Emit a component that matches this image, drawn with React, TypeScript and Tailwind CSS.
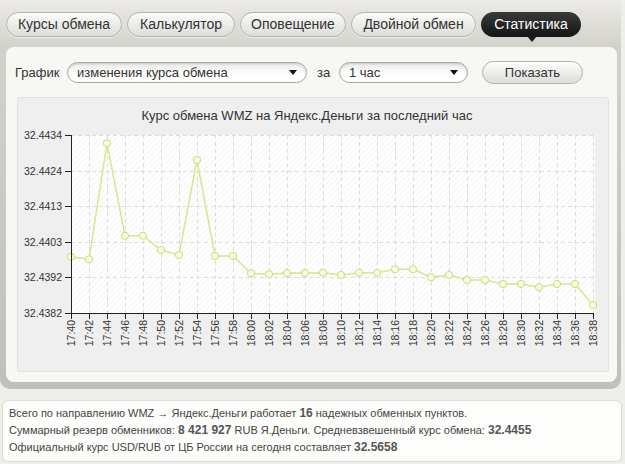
import React from "react";

const TABS = [
  { label: "Курсы обмена", w: "w-[116px]" },
  { label: "Калькулятор", w: "w-[108px]" },
  { label: "Оповещение", w: "w-[106px]" },
  { label: "Двойной обмен", w: "w-[125px]" },
];

const TIMES = Array.from({ length: 30 }, (_, i) => {
  const m = 40 + i * 2;
  const h = 17 + Math.floor(m / 60);
  return `${h}:${String(m % 60).padStart(2, "0")}`;
});

// pixel y of each point (page coords)
const POINTS = [
  256.7, 259.3, 143.3, 235.7, 235.7, 250, 255, 160, 256, 256, 273.3, 274.3, 273, 273, 272.7, 275,
  272.7, 272.7, 269.3, 269.3, 277.3, 275, 280, 280, 284, 284, 287.3, 284, 284, 305,
];

const Y_LABELS = ["32.4434", "32.4424", "32.4413", "32.4403", "32.4392", "32.4382"];

const X0 = 71;
const DX = 18;
const TOP = 135;
const BOTTOM = 313;
const RIGHT = 595;

function Arrow() {
  return (
    <svg width="8" height="5" viewBox="0 0 8 5" className="shrink-0">
      <path d="M0 0h8L4 5z" fill="#111" />
    </svg>
  );
}

function Select({ value, w }: { value: string; w: string }) {
  return (
    <div
      className={`${w} h-[21px] rounded-full border border-[#a9a9a4] bg-[linear-gradient(to_bottom,#e9e9e7,#ffffff_60%)] shadow-[inset_0_1px_2px_rgba(0,0,0,0.15)] flex items-center justify-between pl-[9px] pr-[9px] text-[13px] text-[#333]`}
    >
      <span>{value}</span>
      <Arrow />
    </div>
  );
}

function Chart() {
  const ys = Y_LABELS.map((_, i) => TOP + (i * (BOTTOM - TOP)) / 5);
  const xs = TIMES.map((_, i) => X0 + i * DX);
  const poly = POINTS.map((y, i) => `${xs[i]},${y}`).join(" ");
  return (
    <svg width="590" height="244" className="block">
      <defs>
        <pattern id="hatch" width="4" height="4" patternUnits="userSpaceOnUse" patternTransform="rotate(45)">
          <line x1="0" y1="0" x2="0" y2="4" stroke="#ededed" strokeWidth="1.2" />
        </pattern>
      </defs>
      <g transform="translate(-18,-127)">
        <rect x={X0} y={TOP} width={RIGHT - X0} height={BOTTOM - TOP} fill="#ffffff" />
        <rect x={X0} y={TOP} width={RIGHT - X0} height={BOTTOM - TOP} fill="url(#hatch)" />
        {xs.map((x, i) => (
          <line key={`v${i}`} x1={x + 0.5} y1={TOP} x2={x + 0.5} y2={BOTTOM} stroke="#dcdcdc" strokeDasharray="4 3" />
        ))}
        {ys.map((y, i) => (
          <line key={`h${i}`} x1={X0} y1={Math.round(y) + 0.5} x2={RIGHT} y2={Math.round(y) + 0.5} stroke="#dcdcdc" strokeDasharray="4 3" />
        ))}
        <polyline points={poly} fill="none" stroke="#d6e78e" strokeWidth="1.5" />
        {POINTS.map((y, i) => (
          <circle key={`c${i}`} cx={xs[i]} cy={y} r="3.6" fill="#f8fbe3" stroke="#cadd74" strokeWidth="1" />
        ))}
        <line x1={X0 + 0.5} y1={TOP} x2={X0 + 0.5} y2={BOTTOM} stroke="#222" />
        <line x1={X0} y1={BOTTOM + 0.5} x2={xs[29] + 1} y2={BOTTOM + 0.5} stroke="#222" />
        {ys.map((y, i) => (
          <g key={`yl${i}`}>
            <line x1={65} y1={Math.round(y) + 0.5} x2={X0} y2={Math.round(y) + 0.5} stroke="#222" />
            <text x={62} y={y + 4} textAnchor="end" fontSize="10.5" fill="#333" fontFamily="'Liberation Sans', Arial, sans-serif">
              {Y_LABELS[i]}
            </text>
          </g>
        ))}
        {xs.map((x, i) => (
          <g key={`xl${i}`}>
            <line x1={x + 0.5} y1={BOTTOM} x2={x + 0.5} y2={BOTTOM + 6} stroke="#222" />
            <text
              x={x + 4}
              y={320}
              transform={`rotate(-90 ${x + 4} 320)`}
              textAnchor="end"
              fontSize="10.5"
              fill="#333"
              fontFamily="'Liberation Sans', Arial, sans-serif"
            >
              {TIMES[i]}
            </text>
          </g>
        ))}
      </g>
    </svg>
  );
}

export default function App() {
  return (
    <div className="w-[625px] h-[464px] bg-[#eeeeea] overflow-hidden font-['Liberation_Sans',Arial,sans-serif] text-[#333]">
      <div className="w-[621px] h-[389px] rounded-b-[10px] bg-[linear-gradient(to_bottom,#ecebe7_0px,#d2d1cb_46px,#c0c0ba_100%)] flex flex-col">
        {/* tabs */}
        <div className="h-[47px] pt-[12px] pl-[6px] flex gap-[5px]">
          {TABS.map((t) => (
            <div
              key={t.label}
              className={`${t.w} h-[25px] rounded-full border border-[#b4b4ae] bg-[linear-gradient(to_bottom,#fbfbfa,#dcdcd8)] shadow-[0_1px_1px_rgba(255,255,255,0.6)] flex items-center justify-center text-[14px] text-[#333]`}
            >
              {t.label}
            </div>
          ))}
          <div className="relative w-[100px] h-[25px] rounded-full bg-[linear-gradient(to_bottom,#3a3a3a,#141414)] flex items-center justify-center text-[14px] text-white">
            Статистика
            <div className="absolute left-[46px] -bottom-[5px] w-0 h-0 border-l-[5px] border-r-[5px] border-t-[6px] border-l-transparent border-r-transparent border-t-[#1a1a1a]" />
          </div>
        </div>
        {/* panel */}
        <div className="ml-[6px] w-[611px] h-[335px] rounded-[8px] bg-[#f7f7f4] pt-[14px]">
          <div className="flex items-center h-[23px] pl-[9px] text-[13px]">
            <span className="w-[52px]">График</span>
            <Select value="изменения курса обмена" w="w-[240px]" />
            <span className="ml-[10px] w-[22px]">за</span>
            <Select value="1 час" w="w-[129px]" />
            <div className="ml-[14px] w-[101px] h-[23px] rounded-full border border-[#b2b2ad] bg-[linear-gradient(to_bottom,#fdfdfc,#dddddb)] flex items-center justify-center text-[13px]">
              Показать
            </div>
          </div>
          <div className="ml-[11px] mt-[13px] w-[592px] h-[275px] rounded-[3px] border border-[#e1e1de] bg-[#efefef] flex flex-col">
            <div className="h-[29px] pt-[10px] pr-[12px] text-center text-[13px] leading-[16px] text-[#333]">
              Курс обмена WMZ на Яндекс.Деньги за последний час
            </div>
            <Chart />
          </div>
        </div>
      </div>
      {/* info */}
      <div className="mt-[11px] ml-[2px] w-[620px] h-[62px] rounded-[6px] border border-[#dcdcd6] bg-[#fdfdfb] pl-[6px] pt-[4px] text-[11px] leading-[17px] text-[#444]">
        <div>
          Всего по направлению WMZ → Яндекс.Деньги работает <b className="text-[12px] text-[#555]">16</b> надежных обменных пунктов.
        </div>
        <div>
          Суммарный резерв обменников: <b className="text-[12px] text-[#555]">8 421 927</b> RUB Я.Деньги. Средневзвешенный курс обмена:{" "}
          <b className="text-[12px] text-[#555]">32.4455</b>
        </div>
        <div>
          Официальный курс USD/RUB от ЦБ России на сегодня составляет <b className="text-[12px] text-[#555]">32.5658</b>
        </div>
      </div>
    </div>
  );
}
